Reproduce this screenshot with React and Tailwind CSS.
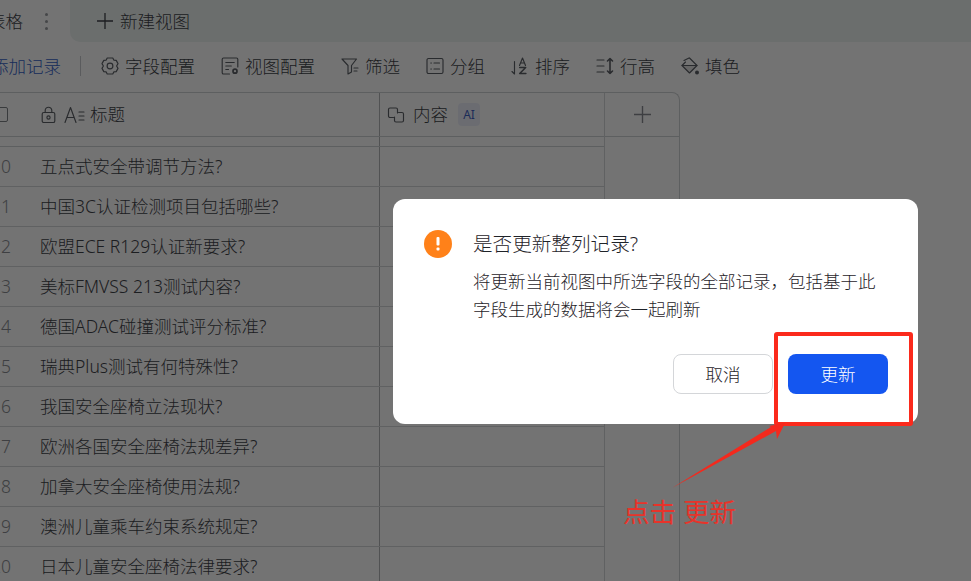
import React from "react";

const rows = [
  ["10", "五点式安全带调节方法?"],
  ["11", "中国3C认证检测项目包括哪些?"],
  ["12", "欧盟ECE R129认证新要求?"],
  ["13", "美标FMVSS 213测试内容?"],
  ["14", "德国ADAC碰撞测试评分标准?"],
  ["15", "瑞典Plus测试有何特殊性?"],
  ["16", "我国安全座椅立法现状?"],
  ["17", "欧洲各国安全座椅法规差异?"],
  ["18", "加拿大安全座椅使用法规?"],
  ["19", "澳洲儿童乘车约束系统规定?"],
  ["20", "日本儿童安全座椅法律要求?"],
];

const Ico = ({ children, w = 18, h = 18, vb = "0 0 18 18" }) => (
  <svg width={w} height={h} viewBox={vb} fill="none" stroke="currentColor" strokeWidth="1.15" strokeLinecap="round" strokeLinejoin="round" className="shrink-0 text-[#5c6066]">
    {children}
  </svg>
);

const IconGear = () => (
  <Ico>
    <path d="M6.2 1h5.6l1 2.1 2.4.3L17 6.6 15.6 9l1.4 2.4-1.8 3.2-2.4.3-1 2.1H6.2l-1-2.1-2.4-.3L1 11.4 2.4 9 1 6.6l1.8-3.2 2.4-.3z" />
    <circle cx="9" cy="9" r="2.9" />
  </Ico>
);
const IconViewCfg = () => (
  <Ico>
    <path d="M8.5 17H2.5a1.3 1.3 0 0 1-1.3-1.3V2.3A1.3 1.3 0 0 1 2.5 1h13a1.3 1.3 0 0 1 1.3 1.3V10" />
    <path d="M4.8 5.5h8.4M4.8 9h5.5M4.8 12.5h2.7" />
    <circle cx="14" cy="14.2" r="2" strokeWidth="1.7" />
  </Ico>
);
const IconFilter = () => (
  <Ico>
    <path d="M1 2h14.5l-5 6.5V15l-3.5 2V8.5z" />
    <path d="M13 11h4M13 14h3" />
  </Ico>
);
const IconGroup = () => (
  <Ico>
    <rect x="1" y="1.5" width="16" height="15" rx="1.5" />
    <path d="M4.8 6h.6M8 6h5.5M4.8 12h.6M8 12h5.5" />
  </Ico>
);
const IconSort = () => (
  <Ico>
    <path d="M3.5 4.5V17M1 14.5l2.5 2.5" />
    <path d="M8.5 8.5l3-7.5 3 7.5M9.6 6h3.8" />
    <path d="M8.7 10.5h6l-6 6h6.2" strokeWidth="1.5" />
  </Ico>
);
const IconRowH = () => (
  <Ico>
    <path d="M1 3h7M1 9h7M1 15h7" />
    <path d="M14 1.5v15M11.5 4L14 1.5 16.5 4M11.5 14l2.5 2.5 2.5-2.5" strokeWidth="1.6" />
  </Ico>
);
const IconFill = () => (
  <Ico>
    <path d="M8.5 1L16 8.5 8.5 16 1 8.5 4.5 5" />
    <path d="M3 3.5L8 1" />
    <path d="M1.5 8.5h14.5L8.5 16z" fill="currentColor" fillOpacity=".18" stroke="none" />
    <path d="M1 8.5h15" />
    <circle cx="16" cy="15.5" r="2" fill="currentColor" stroke="none" />
  </Ico>
);
const IconLock = () => (
  <Ico w={15} h={18} vb="0 0 15 18">
    <rect x="1.2" y="6.5" width="12.6" height="10" rx="1.6" />
    <path d="M4.2 6.5V4.5a3.3 3.3 0 0 1 6.6 0v2" />
    <circle cx="7.5" cy="11.5" r="1.6" />
  </Ico>
);
const IconTextField = () => (
  <Ico w={21} h={18} vb="0 0 21 18">
    <path d="M1 16.5L6.5 1.5 12 16.5M3 11.5h7" />
    <path d="M15 6h5M15 10h5M15 14h5" />
  </Ico>
);
const IconLink = () => (
  <Ico>
    <path d="M6.5 11.5H3a1.5 1.5 0 0 1-1.5-1.5V3.5A1.5 1.5 0 0 1 3 2h6a1.5 1.5 0 0 1 1.5 1.5V7" />
    <path d="M11.5 6.5H15a1.5 1.5 0 0 1 1.5 1.5v6.5A1.5 1.5 0 0 1 15 16H9a1.5 1.5 0 0 1-1.5-1.5V11" />
  </Ico>
);
const IconPlus = ({ s = 16 }) => (
  <svg width={s} height={s} viewBox="0 0 16 16" fill="none" stroke="currentColor" strokeWidth="1.3" className="shrink-0">
    <path d="M8 0v16M0 8h16" />
  </svg>
);

const tools = [
  [IconGear, "字段配置"],
  [IconViewCfg, "视图配置"],
  [IconFilter, "筛选"],
  [IconGroup, "分组"],
  [IconSort, "排序"],
  [IconRowH, "行高"],
  [IconFill, "填色"],
];

export default function App() {
  return (
    <div className="relative w-[971px] h-[581px] overflow-hidden bg-white font-['Noto_Sans','Noto_Sans_CJK_SC',sans-serif] font-light text-[17.5px] text-[#3f4349]">
      {/* tab bar */}
      <div className="flex h-[42px] items-center">
        <div className="flex w-[70px] h-full items-center shrink-0">
          <span className="ml-[-12px] whitespace-nowrap">表格</span>
          <span className="ml-[22px] flex flex-col gap-[4px]">
            <i className="block w-[3px] h-[3px] rounded-full bg-[#9a9da1]"></i>
            <i className="block w-[3px] h-[3px] rounded-full bg-[#9a9da1]"></i>
            <i className="block w-[3px] h-[3px] rounded-full bg-[#9a9da1]"></i>
          </span>
        </div>
        <div className="flex-1 h-full flex items-center pl-[27px] gap-[7px] bg-[#eef3f2] rounded-bl-[10px]">
          <IconPlus />
          <span>新建视图</span>
        </div>
      </div>

      {/* toolbar */}
      <div className="flex h-[50px] items-center pb-[2px]">
        <span className="ml-[-9px] text-[#3662c8] whitespace-nowrap">添加记录</span>
        <span className="ml-[19px] mr-[20px] w-px h-[20px] bg-[#c8cbcf]"></span>
        <div className="flex items-center gap-[26px]">
          {tools.map(([I, label]) => (
            <div key={label} className="flex items-center gap-[6px]">
              <I />
              <span className="whitespace-nowrap">{label}</span>
            </div>
          ))}
        </div>
      </div>

      {/* table */}
      <div className="flex w-[680px] border-t border-r border-[#cfd2d4] rounded-tr-[8px] h-[489px]">
        <div className="w-[604px] shrink-0">
          <div className="flex h-[44px] border-b border-[#cfd2d4]">
            <div className="w-[380px] flex items-center border-r border-[#b4b6b8]">
              <span className="ml-[-6px] w-[14px] h-[15px] border border-[#7f8388] rounded-[2px] shrink-0"></span>
              <span className="ml-[33px] flex"><IconLock /></span>
              <span className="ml-[8px] flex"><IconTextField /></span>
              <span className="ml-[5px]">标题</span>
            </div>
            <div className="flex-1 flex items-center pl-[7px]">
              <IconLink />
              <span className="ml-[8px]">内容</span>
              <span className="ml-[10px] w-[22px] h-[23px] rounded-[4px] bg-[#eef0fb] text-[#3f63c4] text-[12px] font-normal flex items-center justify-center">AI</span>
            </div>
          </div>
          <div className="flex h-[10px] border-b border-[#cfd2d4]">
            <div className="w-[380px] border-r border-[#b4b6b8]"></div>
          </div>
          {rows.map(([n, t]) => (
            <div key={n} className="flex h-[40px] border-b border-[#d6d8da]">
              <div className="w-[380px] flex items-center border-r border-[#b4b6b8] overflow-hidden">
                <span className="w-[11px] flex justify-end shrink-0 text-[#8a8d92] whitespace-nowrap">{n}</span>
                <span className="ml-[29px] whitespace-nowrap">{t}</span>
              </div>
              <div className="flex-1"></div>
            </div>
          ))}
        </div>
        <div className="flex-1 border-l border-[#d6d8da]">
          <div className="h-[44px] border-b border-[#cfd2d4] flex items-center justify-center text-[#8a8d92]">
            <IconPlus s={17} />
          </div>
        </div>
      </div>

      {/* modal mask */}
      <div className="absolute inset-0 bg-black/55"></div>

      {/* dialog */}
      <div className="absolute left-[393px] top-[199px] w-[525px] h-[225px] bg-white rounded-[12px] pl-[31px] pr-[30px] pt-[31px] text-[#1f2329]">
        <div className="flex items-start gap-[21px]">
          <div className="w-[28px] h-[28px] rounded-full bg-[#ff8119] text-white flex items-center justify-center shrink-0">
            <svg width="4" height="14" viewBox="0 0 4 14" fill="currentColor">
              <rect x="0.5" y="0" width="3" height="8.5" rx="1" />
              <rect x="0.5" y="10.5" width="3" height="3" rx="1" />
            </svg>
          </div>
          <div>
            <div className="text-[19.6px] leading-[28px]">是否更新整列记录?</div>
            <div className="mt-[9px] text-[17.5px] leading-[28px]">
              将更新当前视图中所选字段的全部记录，包括基于此
              <br />
              字段生成的数据将会一起刷新
            </div>
          </div>
        </div>
        <div className="flex justify-end gap-[15px] mt-[31px]">
          <button className="w-[100px] h-[40px] rounded-[8px] border border-[#d4d6d9] bg-white text-[#1f2329] text-[17.5px]">取消</button>
          <button className="w-[100px] h-[40px] rounded-[8px] bg-[#1456f0] text-white text-[17.5px]">更新</button>
        </div>
      </div>

      {/* annotation */}
      <div className="absolute left-[774px] top-[332px] w-[139px] h-[94px] border-[4px] border-[#fb2a1c] rounded-[3px]"></div>
      <svg className="absolute left-[660px] top-[415px]" width="135" height="85" viewBox="660 415 135 85">
        <polygon points="672,488 771,427 769,426 785,423 777,439 776,431" fill="#f4291d" />
      </svg>
      <div className="absolute left-[623px] top-[492px] text-[26.5px] font-normal leading-[40px] text-[#e8332a] whitespace-pre">点击 更新</div>
    </div>
  );
}
